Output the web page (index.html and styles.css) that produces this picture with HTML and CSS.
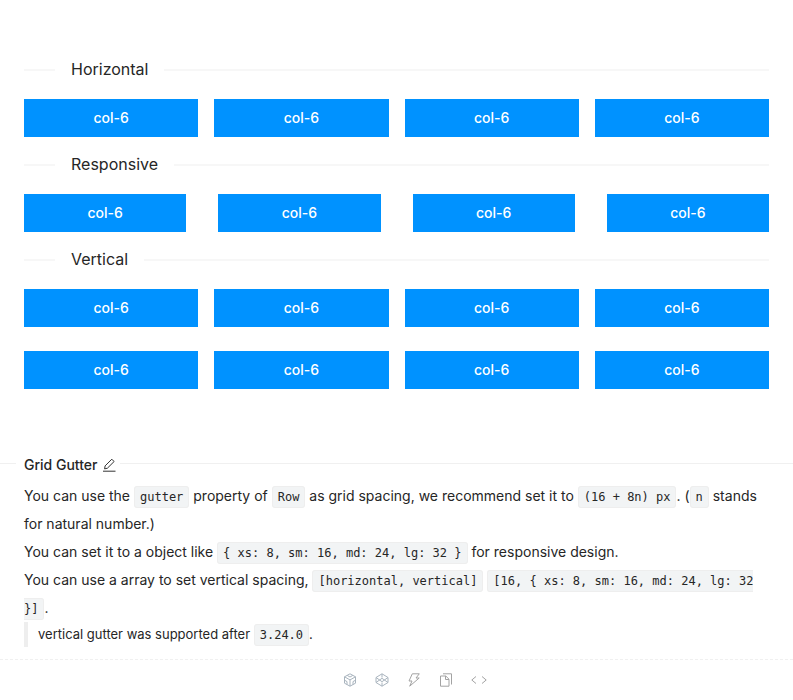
FILE: index.html
```html
<!DOCTYPE html>
<html lang="en">
<head>
<meta charset="utf-8">
<title>Grid Gutter</title>
<link rel="stylesheet" href="styles.css">
</head>
<body>
<main class="demo">
  <h2 class="divider">Horizontal</h2>
  <div class="row">
    <div class="col">col-6</div><div class="col">col-6</div><div class="col">col-6</div><div class="col">col-6</div>
  </div>
  <h2 class="divider">Responsive</h2>
  <div class="row row-wide">
    <div class="col">col-6</div><div class="col">col-6</div><div class="col">col-6</div><div class="col">col-6</div>
  </div>
  <h2 class="divider">Vertical</h2>
  <div class="row row-vertical">
    <div class="col">col-6</div><div class="col">col-6</div><div class="col">col-6</div><div class="col">col-6</div>
    <div class="col">col-6</div><div class="col">col-6</div><div class="col">col-6</div><div class="col">col-6</div>
  </div>
</main>
<section class="meta">
  <div class="heading">
    <h3 class="title">Grid Gutter</h3>
    <a class="edit" href="#edit" aria-label="Edit"><svg viewBox="0 0 14 14" width="14" height="14"><path d="M1 13.2h12.5M2.600 10.900l.5-3L9.800 1.200l2.300 2.300-6.700 6.700z"/></svg></a>
  </div>
  <div class="description">
    <p>You can use the <code>gutter</code> property of <code>Row</code> as grid spacing, we recommend set it to <code>(16 + 8n) px</code>. (<code>n</code> stands for natural number.)</p>
    <p>You can set it to a object like <code>{ xs: 8, sm: 16, md: 24, lg: 32 }</code> for responsive design.</p>
    <p>You can use a array to set vertical spacing, <code>[horizontal, vertical]</code> <code>[16, { xs: 8, sm: 16, md: 24, lg: 32 }]</code>.</p>
    <blockquote>vertical gutter was supported after <code>3.24.0</code>.</blockquote>
  </div>
</section>
<footer class="actions">
  <button type="button" aria-label="Open in CodeSandbox"><svg class="cool" viewBox="0 0 14 14" width="14" height="14"><path d="M7 .8l5.500 3v6.400L7 13.200l-5.500-3V3.800zM1.500 3.800L7 6.900l5.500-3.100M7 6.900v6.300M4.200 2.400L7 4l2.800-1.600M1.500 7.200L4 8.600v3M12.500 7.200L10 8.600v3"/></svg></button>
  <button type="button" aria-label="Open in CodePen"><svg class="cool" viewBox="0 0 14 14" width="14" height="14"><path d="M7 .8l6 3.700v5L7 13.200l-6-3.700v-5zM7 .8v3.700M7 9.500v3.700M1 4.500l6 4.200 6-4.200M1 9.500l6-4.200 6 4.200"/></svg></button>
  <button type="button" aria-label="Open in StackBlitz"><svg viewBox="0 0 14 14" width="14" height="14"><path d="M5.300.8h7L9 5h3.200L2.700 13.200 5 8H2z"/></svg></button>
  <button type="button" aria-label="Copy code"><svg viewBox="0 0 14 14" width="14" height="14"><path d="M4 .8h8.500v10.700M1.500 3h5.300L10 6.200v7H1.500zM6.500 3v3.500H10"/></svg></button>
  <button type="button" aria-label="Show code"><svg class="code" viewBox="0 0 16 14" width="16" height="14"><path d="M5 3.500L.8 7 5 10.500M11 3.500L15.200 7 11 10.500"/></svg></button>
</footer>
</body>
</html>
```
FILE: styles.css
```css
* { box-sizing: border-box; }
body {
  margin: 0;
  background: #fff;
  color: #262626;
  font: 14px/22px Inter, "Liberation Sans", sans-serif;
}
.demo { padding: 42px 24px 50px; }
.divider {
  display: flex;
  align-items: center;
  gap: 16px;
  margin: 15px 0 17px;
  font-size: 16px;
  line-height: 25px;
  font-weight: 400;
}
.divider::before, .divider::after {
  content: "";
  height: 2px;
  background: #f7f7f7;
}
.divider::before { width: 31px; }
.divider::after { flex: 1; }
.row {
  display: grid;
  grid-template-columns: repeat(4, 1fr);
  gap: 16px;
}
.row-wide { column-gap: 32px; }
.row-vertical { row-gap: 24px; }
.col {
  padding: 8px 0;
  background: #0092ff;
  color: #fff;
  text-align: center;
  font-weight: 500;
}
.heading {
  display: flex;
  align-items: center;
  margin-top: 11px;
  gap: 4px;
}
.heading::before { content: ""; width: 16px; margin-right: 4px; border-top: 1px solid #f0f0f0; }
.heading::after { content: ""; flex: 1; border-top: 1px solid #f0f0f0; }
.title { margin: 0; padding-top: 4px; font-size: 14px; font-weight: 500; }
.edit { display: flex; padding-top: 4px; }
svg { fill: none; stroke: #a3a3a3; stroke-width: 1; }
.edit svg { stroke: #333; }
svg.cool { stroke: #a9b4be; }
.description { padding: 6px 24px 12px; }
p { margin: 0; line-height: 28px; }
code {
  padding: 3px 5px;
  background: #f2f4f5;
  border: 1px solid #eee;
  border-radius: 3px;
  font: 12px/22px "DejaVu Sans Mono", monospace;
}
blockquote {
  margin: 0;
  padding-left: 10px;
  border-left: 4px solid #eee;
  font-size: 13px;
  line-height: 25px;
}
.actions {
  display: flex;
  justify-content: center;
  align-items: center;
  gap: 16px;
  padding: 12px 0 12px 36px;
  border-top: 1px dashed #f0f0f0;
}
.actions button {
  display: flex;
  padding: 1px;
  border: 0;
  background: none;
}
```
